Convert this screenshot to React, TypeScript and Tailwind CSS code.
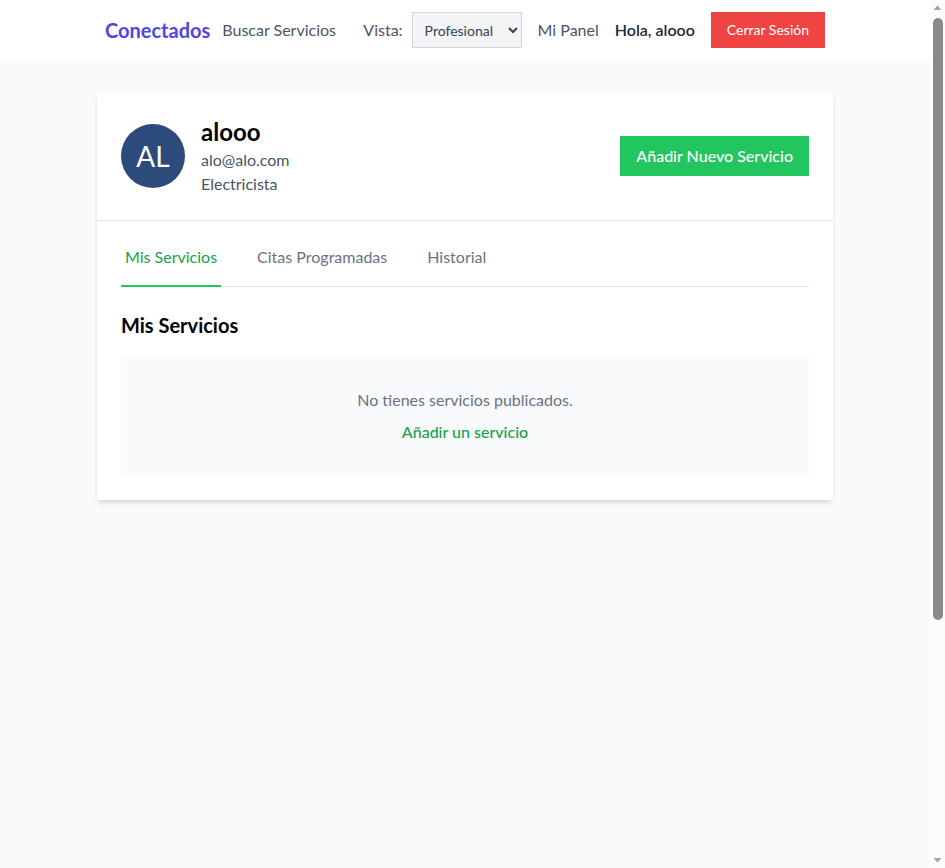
import React from "react";

function FakeScrollbar() {
  return (
    <div className="w-[15px] h-full bg-[#fcfcfc] flex flex-col items-center shrink-0">
      <svg width="15" height="15" viewBox="0 0 15 15" className="shrink-0">
        <polygon points="3.5,10 11.5,10 7.5,5.5" fill="#a3a3a3" />
      </svg>
      <div className="w-[10px] h-[602px] mt-[3px] rounded-full bg-[#8a8a8a]" />
      <div className="flex-1" />
      <svg width="15" height="15" viewBox="0 0 15 15" className="shrink-0">
        <polygon points="3.5,5 11.5,5 7.5,9.5" fill="#a3a3a3" />
      </svg>
    </div>
  );
}

export default function App() {
  return (
    <div className="flex h-screen w-full overflow-hidden" style={{ fontFamily: "Lato, 'Noto Sans', sans-serif" }}>
      <div className="flex-1 min-w-0 h-full overflow-hidden">
        <div className="min-h-[1210px] bg-gray-50">
          <nav className="bg-white h-[60px]">
            <div className="max-w-3xl mx-auto px-6 h-full flex items-center justify-between">
              <div className="flex items-center gap-3">
                <span className="text-[20px] font-bold text-[#4f46e5]">Conectados</span>
                <span className="text-base text-gray-600">Buscar Servicios</span>
              </div>
              <div className="flex items-center gap-4">
                <div className="flex items-center gap-[9px]">
                  <span className="text-base text-gray-600">Vista:</span>
                  <select
                    defaultValue="Profesional"
                    className="h-[36px] w-[110px] bg-gray-100 border border-gray-300 text-sm text-gray-700 px-2"
                  >
                    <option>Profesional</option>
                    <option>Cliente</option>
                  </select>
                </div>
                <span className="text-base text-gray-600">Mi Panel</span>
                <span className="text-base font-semibold text-gray-800">Hola, alooo</span>
                <button className="h-[36px] px-4 bg-[#ef4444] text-white text-sm">Cerrar Sesión</button>
              </div>
            </div>
          </nav>
          <main className="max-w-3xl mx-auto px-4 py-8">
            <div className="bg-white shadow-md">
              <div className="p-6 flex items-center justify-between border-b border-gray-200">
                <div className="flex items-center gap-4">
                  <div className="w-16 h-16 rounded-full bg-[#2c4a7a] flex items-center justify-center text-white text-[28px]">
                    AL
                  </div>
                  <div className="flex flex-col">
                    <span className="text-2xl font-bold text-black leading-8">alooo</span>
                    <span className="text-base text-gray-600 leading-6">alo@alo.com</span>
                    <span className="text-base text-gray-600 leading-6">Electricista</span>
                  </div>
                </div>
                <button className="h-10 px-4 bg-[#22c55e] text-white text-base font-medium">Añadir Nuevo Servicio</button>
              </div>
              <div className="p-6">
                <div className="flex gap-8 border-b border-gray-200">
                  <div className="px-1 pb-4 border-b-2 border-[#22c55e] -mb-px text-[#16a34a] text-base">Mis Servicios</div>
                  <div className="px-1 pb-4 text-gray-500 text-base">Citas Programadas</div>
                  <div className="px-1 pb-4 text-gray-500 text-base">Historial</div>
                </div>
                <h2 className="mt-6 text-xl font-bold text-black leading-7">Mis Servicios</h2>
                <div className="mt-[17px] bg-gray-50 p-8 flex flex-col items-center">
                  <p className="text-base text-gray-500 leading-6">No tienes servicios publicados.</p>
                  <button className="mt-2 text-base font-medium text-[#16a34a] leading-6">Añadir un servicio</button>
                </div>
              </div>
            </div>
          </main>
        </div>
      </div>
      <FakeScrollbar />
    </div>
  );
}
